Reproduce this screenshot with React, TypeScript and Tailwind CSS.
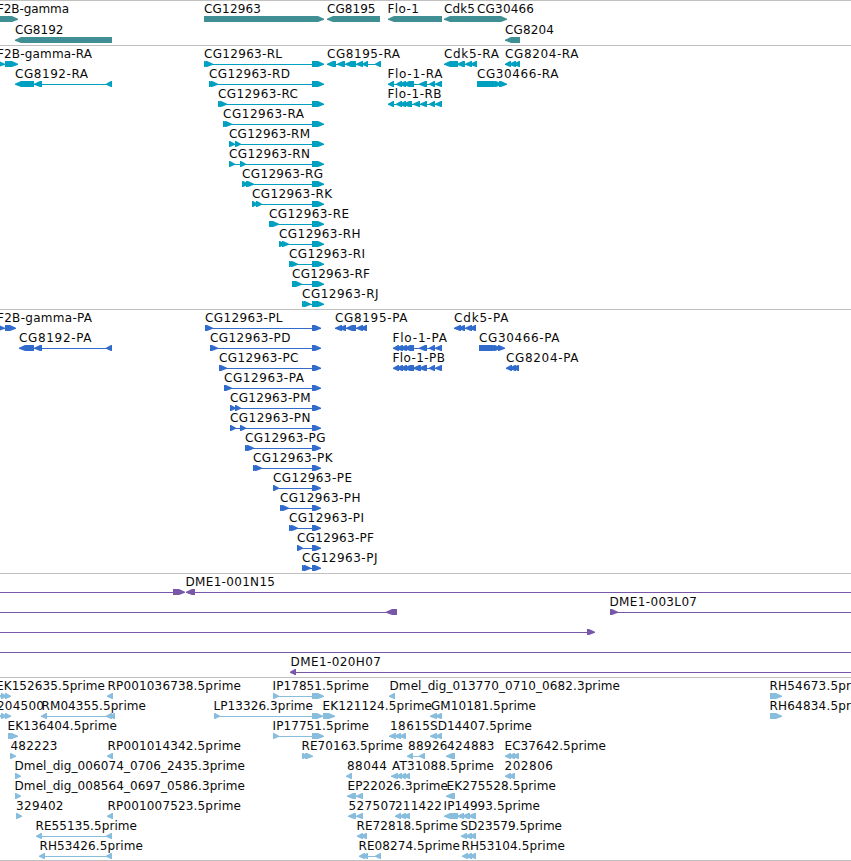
type Dir = "r" | "l"
type Span = [number, number]

interface Feature {
  row: number
  label?: string
  // label start and end
  text?: Span
  dir: Dir
  // thin connecting line, when it reaches past the blocks
  line?: Span
  blocks: Span[]
}

interface Track {
  id: string
  color: string
  height: number
  rowHeight: number
  features: Feature[]
}

const f = (row: number, label: string, start: number, end: number, dir: Dir, blocks: Span[], line?: Span): Feature => ({
  row,
  label,
  text: [start, end],
  dir,
  blocks,
  line,
})

const genes: Feature[] = [
  f(0, "F2B-gamma", -3, 69, "r", [[-10, 18]]),
  f(1, "CG8192", 15, 63.5, "l", [[15, 112]]),
  f(0, "CG12963", 204, 261, "r", [[204, 324]]),
  f(0, "CG8195", 327, 375.5, "l", [[327, 380]]),
  f(0, "Flo-1", 387.5, 419, "l", [[388, 442]]),
  f(0, "Cdk5", 444, 475, "l", [[444, 480]]),
  f(0, "CG30466", 477, 534, "r", [[477, 507]]),
  f(1, "CG8204", 505, 554, "l", [[505, 520]]),
]

const transcripts: Feature[] = [
  f(0, "F2B-gamma-RA", -3, 92, "r", [[-5, 5], [5, 18]]),
  f(1, "CG8192-RA", 15, 88, "l", [[15, 34], [34, 42], [106, 112]]),
  f(0, "CG12963-RL", 204, 282, "r", [[204, 210], [206, 213], [312, 324]]),
  f(1, "CG12963-RD", 209, 290, "r", [[209, 215], [211, 218], [312, 324]]),
  f(2, "CG12963-RC", 218, 298, "r", [[218, 224], [220, 227], [312, 324]]),
  f(3, "CG12963-RA", 223, 304, "r", [[223, 229], [225, 232], [312, 324]]),
  f(4, "CG12963-RM", 229, 310, "r", [[229, 235], [235, 241], [312, 324]]),
  f(5, "CG12963-RN", 229, 310, "r", [[229, 235], [240, 246], [312, 324]]),
  f(6, "CG12963-RG", 242, 323, "r", [[242, 249], [246, 254], [312, 324]]),
  f(7, "CG12963-RK", 252, 332, "r", [[252, 258], [256, 262], [312, 324]]),
  f(8, "CG12963-RE", 269, 349, "r", [[269, 279], [312, 324]]),
  f(9, "CG12963-RH", 279, 360.5, "r", [[279, 285], [282, 289], [312, 324]]),
  f(10, "CG12963-RI", 289, 365, "r", [[289, 295], [291, 298], [312, 324]]),
  f(11, "CG12963-RF", 292, 370, "r", [[292, 302], [312, 324]]),
  f(12, "CG12963-RJ", 302, 378.5, "r", [[302, 308], [304, 311], [312, 324]]),
  f(0, "CG8195-RA", 327, 400, "l", [[327, 336], [337, 345], [345, 356], [356, 363], [362, 368], [375, 381]]),
  f(1, "Flo-1-RA", 387.5, 442.5, "l", [[388, 394], [396, 402], [399, 406], [403, 414], [419, 427], [429, 435], [435, 442]]),
  f(2, "Flo-1-RB", 387.5, 441.5, "l", [[388, 394], [396, 402], [399, 406], [403, 412], [413, 420], [420, 427], [429, 435], [435, 442]]),
  f(0, "Cdk5-RA", 444, 499, "l", [[444, 458], [457, 465], [465, 472], [470, 477]]),
  f(0, "CG8204-RA", 505, 578.5, "l", [[505, 511], [509, 516], [513, 520]]),
  f(1, "CG30466-RA", 477, 558.5, "r", [[477, 500], [495, 502], [499, 507]]),
]

const proteins: Feature[] = [
  f(0, "F2B-gamma-PA", -3, 92, "r", [[-5, 5], [5, 16]]),
  f(1, "CG8192-PA", 19, 91.5, "l", [[19, 34], [34, 42], [106, 112]]),
  f(0, "CG12963-PL", 205, 282.5, "r", [[205, 213], [312, 321]]),
  f(1, "CG12963-PD", 210, 290.5, "r", [[210, 218], [312, 321]]),
  f(2, "CG12963-PC", 219, 298.5, "r", [[219, 227], [312, 321]]),
  f(3, "CG12963-PA", 224, 304, "r", [[224, 232], [312, 321]]),
  f(4, "CG12963-PM", 230, 310.5, "r", [[230, 236], [235, 241], [312, 321]]),
  f(5, "CG12963-PN", 230, 310.5, "r", [[230, 236], [240, 246], [312, 321]]),
  f(6, "CG12963-PG", 245, 325.5, "r", [[245, 251], [247, 254], [312, 321]]),
  f(7, "CG12963-PK", 253, 332.5, "r", [[253, 259], [255, 262], [312, 321]]),
  f(8, "CG12963-PE", 273, 352, "r", [[273, 279], [312, 321]]),
  f(9, "CG12963-PH", 280, 360.5, "r", [[280, 286], [282, 289], [312, 321]]),
  f(10, "CG12963-PI", 289, 364, "r", [[289, 295], [291, 298], [312, 321]]),
  f(11, "CG12963-PF", 297, 374, "r", [[297, 303], [312, 321]]),
  f(12, "CG12963-PJ", 302, 377.5, "r", [[302, 308], [304, 311], [312, 321]]),
  f(0, "CG8195-PA", 335, 407.5, "l", [[335, 342], [339, 346], [346, 356], [356, 363], [360, 367]]),
  f(1, "Flo-1-PA", 392.5, 447, "l", [[393, 399], [396, 403], [400, 407], [404, 414], [419, 427], [429, 435], [435, 442]]),
  f(2, "Flo-1-PB", 392.5, 445, "l", [[393, 399], [396, 403], [400, 407], [404, 414], [413, 421], [419, 427], [429, 435], [435, 442]]),
  f(0, "Cdk5-PA", 454, 508.5, "l", [[454, 461], [458, 465], [465, 472], [469, 476]]),
  f(1, "CG30466-PA", 479, 559.5, "r", [[479, 499], [494, 501], [498, 505]]),
  f(2, "CG8204-PA", 506, 578.5, "l", [[506, 512], [509, 516], [512, 519]]),
]

const clones: Feature[] = [
  { row: 0, dir: "r", line: [0, 184], blocks: [[173, 185]] },
  f(0, "DME1-001N15", 185.5, 275, "l", [[186, 195]], [186, 851]),
  { row: 1, dir: "l", line: [0, 390], blocks: [[386, 397]] },
  f(1, "DME1-003L07", 609.5, 697, "r", [[610, 618]], [610, 851]),
  { row: 2, dir: "r", line: [0, 594], blocks: [[587, 595]] },
  { row: 3, dir: "r", line: [0, 851], blocks: [] },
  f(4, "DME1-020H07", 290.5, 381, "l", [[290, 296]], [291, 851]),
]

const ests: Feature[] = [
  f(0, "EK152635.5prime", -4, 105, "r", [[-4, 2], [1, 7], [5, 11]]),
  f(0, "RP001036738.5prime", 107.5, 241, "l", [[107, 113]]),
  f(0, "IP17851.5prime", 272.5, 369, "r", [[273, 279], [312, 324]]),
  f(0, "Dmel_dig_013770_0710_0682.3prime", 389.5, 620, "l", [[389, 395]]),
  f(0, "RH54673.5prime", 769.5, 874, "r", [[770, 782]]),
  f(1, "204500", -3, 44, "r", [[-4, 2], [1, 7], [5, 11]]),
  f(1, "RM04355.5prime", 41.5, 146, "l", [[41, 47], [106, 112], [109, 115]]),
  f(1, "LP13326.3prime", 213.5, 313, "r", [[214, 220], [312, 323], [323, 323]]),
  f(1, "EK121124.5prime", 322.5, 432, "r", [[323, 335]]),
  f(1, "GM10181.5prime", 431, 536, "l", [[430, 437], [435, 442]]),
  f(1, "RH64834.5prime", 769.5, 874, "r", [[770, 782]]),
  f(2, "EK136404.5prime", 7.5, 117, "r", [[8, 18]]),
  f(2, "IP17751.5prime", 272.5, 369, "r", [[273, 279], [312, 324]]),
  f(2, "18615", 390, 430, "l", [[389, 396], [394, 401], [399, 406]]),
  f(2, "SD14407.5prime", 430, 532, "l", [[430, 437], [435, 442]]),
  f(3, "482223", 10.5, 57.5, "r", [[10, 16]]),
  f(3, "RP001014342.5prime", 107.5, 241, "l", [[107, 113]]),
  f(3, "RE70163.5prime", 301.5, 403, "r", [[302, 308], [305, 313]]),
  f(3, "88926", 408, 447.5, "l", [[407, 413], [419, 425]]),
  f(3, "424883", 447, 494.5, "l", [[446, 455]]),
  f(3, "EC37642.5prime", 504.5, 606, "l", [[505, 511], [508, 515], [512, 519]]),
  f(4, "Dmel_dig_006074_0706_2435.3prime", 14.5, 245, "r", [[15, 21]]),
  f(4, "88044", 347, 387, "l", [[346, 352]]),
  f(4, "AT31088.5prime", 392, 494, "l", [[391, 398], [396, 402], [400, 406], [404, 410]]),
  f(4, "202806", 504.5, 553, "l", [[505, 511], [508, 515]]),
  f(5, "Dmel_dig_008564_0697_0586.3prime", 14.5, 245, "r", [[15, 21]]),
  f(5, "EP22026.3prime", 347.5, 448, "l", [[347, 356], [356, 363]]),
  f(5, "EK275528.5prime", 446.5, 556, "l", [[446, 455]]),
  f(6, "329402", 16, 63.5, "r", [[16, 22]]),
  f(6, "RP001007523.5prime", 107.5, 241, "l", [[107, 113]]),
  f(6, "527507", 348.5, 396, "l", [[348, 356], [356, 363]]),
  f(6, "211422", 395, 442, "l", [[395, 401], [399, 406], [403, 410]]),
  f(6, "IP14993.5prime", 443.5, 540, "l", [[444, 458], [457, 464], [462, 470], [468, 476]]),
  f(7, "RE55135.5prime", 35.5, 137, "l", [[36, 42], [106, 112]]),
  f(7, "RE72818.5prime", 356.5, 458, "l", [[357, 363], [360, 367]]),
  f(7, "SD23579.5prime", 460.5, 562, "l", [[461, 467], [465, 472], [469, 476]]),
  f(8, "RH53426.5prime", 39.5, 143, "l", [[39, 45], [106, 112]]),
  f(8, "RE08274.5prime", 358.5, 460, "l", [[359, 365], [362, 368], [375, 381]]),
  f(8, "RH53104.5prime", 461.5, 565, "l", [[462, 468], [465, 472], [469, 476]]),
]

const tracks: Track[] = [
  { id: "genes", color: "#408f94", height: 45, rowHeight: 21, features: genes },
  { id: "transcripts", color: "#00a0c0", height: 264, rowHeight: 20, features: transcripts },
  { id: "proteins", color: "#316ccc", height: 264, rowHeight: 20, features: proteins },
  { id: "clones", color: "#7857a8", height: 104, rowHeight: 20, features: clones },
  { id: "ests", color: "#88bddd", height: 183, rowHeight: 20, features: ests },
]

// block with a pointed end in the direction of the strand
function blockPoints([a, b]: Span, dir: Dir, y: number) {
  const head = Math.min(Math.max(b - a - 1, 0), 6)
  if (dir === "r") {
    return `${a},${y} ${b - head},${y} ${b},${y + 2.7} ${b},${y + 3.7} ${b - head},${y + 6} ${a},${y + 6}`
  }
  return `${b},${y} ${a + head},${y} ${a},${y + 2.7} ${a},${y + 3.7} ${a + head},${y + 6} ${b},${y + 6}`
}

function FeatureGlyph({ feature, rowHeight }: { feature: Feature; rowHeight: number }) {
  const { row, label, text, dir, blocks } = feature
  const top = row * rowHeight
  const line = feature.line ?? [blocks[0][0], blocks[blocks.length - 1][1]]
  return (
    <g>
      <rect x={line[0]} y={top + 18} width={line[1] - line[0]} height={1} />
      {blocks.map((block, i) => (
        <polygon key={i} points={blockPoints(block, dir, top + 15)} />
      ))}
      {label && text && (
        <text x={text[0]} y={top + 12} textLength={text[1] - text[0]} className="fill-[#0a0a0a]">
          {label}
        </text>
      )}
    </g>
  )
}

function TrackRow({ track }: { track: Track }) {
  return (
    <section className="border-t border-[#c0c0c0]">
      <svg
        width={851}
        height={track.height - 1}
        fill={track.color}
        className="block font-['DejaVu_Sans',sans-serif] text-[12px]"
      >
        {track.features.map((feature, i) => (
          <FeatureGlyph key={i} feature={feature} rowHeight={track.rowHeight} />
        ))}
      </svg>
    </section>
  )
}

export default function App() {
  return (
    <main className="flex w-[851px] flex-col overflow-hidden border-b border-[#c0c0c0] bg-white">
      {tracks.map((track) => (
        <TrackRow key={track.id} track={track} />
      ))}
    </main>
  )
}
